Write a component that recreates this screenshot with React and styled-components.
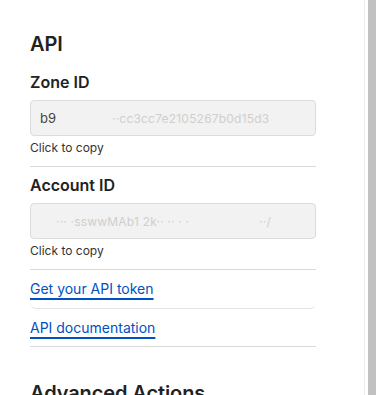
import React from "react";
import styled, { createGlobalStyle } from "styled-components";

const Global = createGlobalStyle`
  html, body { margin: 0; padding: 0; background: #fff; }
  body {
    font-family: Inter, "Noto Sans", "Liberation Sans", sans-serif;
    color: #222;
    height: 395px;
    overflow: hidden;
  }
`;

const Page = styled.div`
  display: flex;
  width: 380px;
  height: 395px;
  overflow: hidden;
`;

const Main = styled.main`
  flex: 1;
  padding: 32px 0 0 30px;
`;

const Column = styled.div`
  width: 286px;
  display: flex;
  flex-direction: column;
`;

const Heading = styled.h2`
  margin: ${(p) => p.$top || 0}px 0 0;
  font-size: 20px;
  line-height: 24px;
  font-weight: 600;
  color: #222;
  letter-spacing: -0.1px;
  white-space: nowrap;
`;

const Label = styled.h3`
  margin: ${(p) => p.$top}px 0 0;
  font-size: 16px;
  line-height: 20px;
  font-weight: 600;
  color: #222;
`;

const Field = styled.div`
  margin-top: 8px;
  height: 34px;
  border: 1px solid #dcdcdc;
  border-radius: 4px;
  background: #f2f2f2;
  display: flex;
  align-items: center;
  padding: 0 9px;
  font-size: 13px;
  color: #444;
  white-space: nowrap;
  overflow: hidden;
`;

const Faint = styled.span`
  color: #cfcfcf;
  font-size: 12px;
  margin-left: ${(p) => p.$gap || 0}px;
  letter-spacing: 0.2px;
`;

const Caption = styled.div`
  margin-top: 4px;
  font-size: 12px;
  line-height: 16px;
  color: #333;
`;

const Divider = styled.hr`
  margin: ${(p) => p.$top || 0}px 0 0;
  border: 0;
  height: 1px;
  background: #d9d9d9;
`;

const LinkRow = styled.div`
  padding: 8px 0 ${(p) => (p.$card ? 9 : 8)}px;
  border-bottom: 1px solid ${(p) => (p.$card ? "#e4e4e4" : "#d9d9d9")};
  border-radius: ${(p) => (p.$card ? "0 0 6px 6px" : "0")};
`;

const Link = styled.a`
  font-size: 14px;
  line-height: 20px;
  color: #0051c3;
  text-decoration: underline;
  text-decoration-thickness: 1.5px;
  text-underline-offset: 4px;
  cursor: pointer;
`;

const Rail = styled.div`
  width: 10px;
  margin-right: 2px;
  border-left: 1px solid #ebebeb;
  padding-left: 3px;
  display: flex;
`;

const Thumb = styled.div`
  width: 8px;
  background: #c1c1c1;
`;

export default function App() {
  return (
    <>
      <Global />
      <Page>
        <Main>
          <Column>
            <Heading>API</Heading>
            <Label $top={16}>Zone ID</Label>
            <Field>
              b9<Faint $gap={56}>··cc3cc7e2105267b0d15d3</Faint>
            </Field>
            <Caption>Click to copy</Caption>
            <Divider $top={10} />
            <Label $top={8}>Account ID</Label>
            <Field>
              <Faint $gap={16}>··· ·sswwMAb1 2k·· ·· · ·</Faint>
              <Faint $gap={70}>··/</Faint>
            </Field>
            <Caption>Click to copy</Caption>
            <Divider $top={10} />
            <LinkRow $card>
              <Link>Get your API token</Link>
            </LinkRow>
            <LinkRow>
              <Link>API documentation</Link>
            </LinkRow>
            <Heading $top={34}>Advanced Actions</Heading>
          </Column>
        </Main>
        <Rail>
          <Thumb />
        </Rail>
      </Page>
    </>
  );
}
